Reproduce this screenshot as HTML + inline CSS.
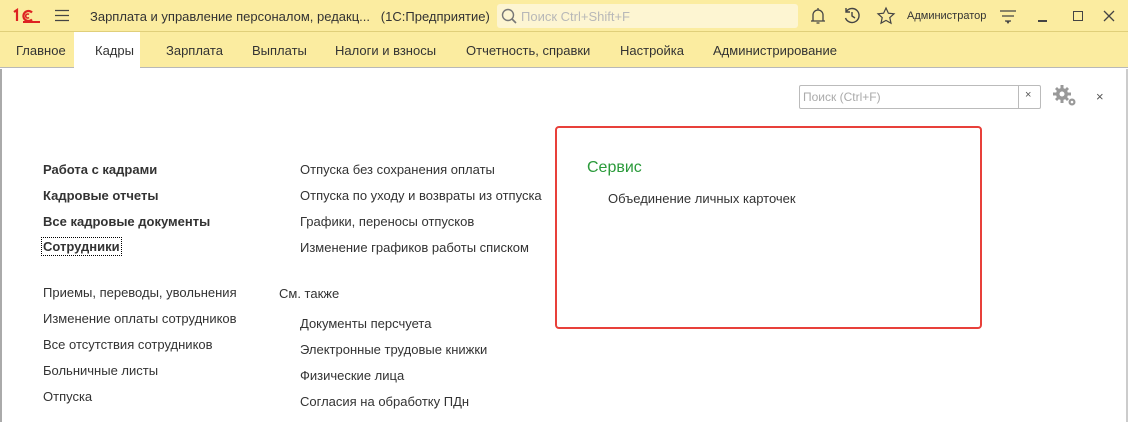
<!DOCTYPE html><html><head><meta charset="utf-8"><style>
*{margin:0;padding:0;box-sizing:border-box}
body{width:1128px;height:422px;overflow:hidden;background:#fff;font-family:"Liberation Sans",Arial,sans-serif;font-size:13px;color:#333;position:relative}
.a{position:absolute;white-space:nowrap}
#top{position:absolute;left:0;top:0;width:1128px;height:32px;background:#fbeca0;border-bottom:1px solid #e0cf7a}
#tabs{position:absolute;left:0;top:32px;width:1128px;height:36px;background:#fbeca0;border-bottom:1px solid #b8b8b8}
.b{font-weight:bold}
</style></head><body>
<div id="top"></div>
<div id="tabs"></div>
<div class="a" style="left:0;top:69px;width:2px;height:353px;background:#aaa"></div>
<div class="a" style="left:1126px;top:69px;width:2px;height:353px;background:#ccc"></div>
<svg class="a" style="left:12px;top:8px" width="28" height="16" viewBox="0 0 28 16"><path d="M2 4L5 2V13" fill="none" stroke="#d22" stroke-width="2.2"/><path d="M20 4.5A5 5 0 1 0 20 11.5" fill="none" stroke="#d22" stroke-width="2.2"/><path d="M17 6.5A2 2 0 1 0 17 9.5" fill="none" stroke="#d22" stroke-width="1.6"/><path d="M11 14H28" stroke="#d22" stroke-width="2"/></svg>
<svg class="a" style="left:55px;top:9px" width="14" height="13"><path d="M0 1.5H14M0 6.5H14M0 11.5H14" stroke="#444" stroke-width="1.3"/></svg>
<div class="a" style="left:90px;top:9px">Зарплата и управление персоналом, редакц...&nbsp;&nbsp;&nbsp;(1С:Предприятие)</div>
<div class="a" style="left:497px;top:4px;width:301px;height:24px;background:#fdf5d2;border-radius:3px"></div>
<svg class="a" style="left:501px;top:8px" width="16" height="16"><circle cx="7" cy="7" r="5.5" fill="none" stroke="#777" stroke-width="1.4"/><path d="M11 11L15 15" stroke="#777" stroke-width="1.6"/></svg>
<div class="a" style="left:521px;top:9px;color:#b8b8b8">Поиск Ctrl+Shift+F</div>
<svg class="a" style="left:808px;top:6px;width:20px;height:20px" viewBox="0 0 20 20"><path d="M5 15V9a5 5 0 0110 0v6zM3 15h14M8.5 17h3M10 2v2" fill="none" stroke="#444" stroke-width="1.3"/></svg>
<svg class="a" style="left:842px;top:6px;width:20px;height:20px" viewBox="0 0 20 20"><path d="M4 6A7 7 0 1 1 3.5 12M4 2v4h4M10 6v4l3 2" fill="none" stroke="#444" stroke-width="1.4"/></svg>
<svg class="a" style="left:876px;top:6px;width:20px;height:20px" viewBox="0 0 20 20"><path d="M10 2l2.4 5.2 5.6.6-4.2 3.8 1.2 5.6L10 14.4 5 17.2l1.2-5.6L2 7.8l5.6-.6z" fill="none" stroke="#444" stroke-width="1.2"/></svg>
<div class="a" style="left:907px;top:10px;font-size:11px">Администратор</div>
<svg class="a" style="left:998px;top:8px" width="20" height="18"><path d="M2 3H18M4 8H16M7 13h6" stroke="#444" stroke-width="1.3"/><path d="M8 13l2 3 2-3z" fill="#444"/></svg>
<div class="a" style="left:1038px;top:20px;width:9px;height:1.5px;background:#444"></div>
<div class="a" style="left:1073px;top:11px;width:10px;height:10px;border:1.3px solid #444"></div>
<svg class="a" style="left:1103px;top:10px" width="12" height="12"><path d="M1 1L11 11M11 1L1 11" stroke="#444" stroke-width="1.3"/></svg>
<div class="a" style="left:74px;top:32px;width:66px;height:36px;background:#fff"></div>
<div class="a" style="left:16px;top:43px">Главное</div>
<div class="a" style="left:95px;top:43px">Кадры</div>
<div class="a" style="left:166px;top:43px">Зарплата</div>
<div class="a" style="left:252px;top:43px">Выплаты</div>
<div class="a" style="left:335px;top:43px">Налоги и взносы</div>
<div class="a" style="left:466px;top:43px">Отчетность, справки</div>
<div class="a" style="left:620px;top:43px">Настройка</div>
<div class="a" style="left:713px;top:43px">Администрирование</div>
<div class="a" style="left:799px;top:85px;width:242px;height:24px;border:1px solid #bbb;border-radius:2px"></div>
<div class="a" style="left:1018px;top:85px;width:1px;height:24px;background:#bbb"></div>
<div class="a" style="left:803px;top:90px;color:#aaa;font-size:12px">Поиск (Ctrl+F)</div>
<div class="a" style="left:1025px;top:89px;font-size:11px;color:#555">×</div>
<svg class="a" style="left:1052px;top:84px" width="26" height="24" viewBox="0 0 26 24"><g fill="#999"><circle cx="10" cy="10" r="6"/><path d="M8.5 1h3v4h-3zM8.5 15h3v4h-3zM1 8.5h4v3H1zM15 8.5h4v3h-4zM3 5l2-2 3 3-2 2zM12 14l2-2 3 3-2 2zM3 15l3-3 2 2-3 3zM12 6l3-3 2 2-3 3z"/><circle cx="20" cy="18" r="3.5"/></g><circle cx="10" cy="10" r="2.5" fill="#fff"/><circle cx="20" cy="18" r="1.3" fill="#fff"/></svg>
<div class="a" style="left:1096px;top:89px;font-size:13px;color:#555">×</div>
<div class="a b" style="left:43px;top:162px">Работа с кадрами</div>
<div class="a b" style="left:43px;top:188px">Кадровые отчеты</div>
<div class="a b" style="left:43px;top:214px">Все кадровые документы</div>
<div class="a b" style="left:41px;top:237px;border:1px dotted #000;padding:1px 1px">Сотрудники</div>
<div class="a" style="left:43px;top:285px">Приемы, переводы, увольнения</div>
<div class="a" style="left:43px;top:311px">Изменение оплаты сотрудников</div>
<div class="a" style="left:43px;top:337px">Все отсутствия сотрудников</div>
<div class="a" style="left:43px;top:363px">Больничные листы</div>
<div class="a" style="left:43px;top:389px">Отпуска</div>
<div class="a" style="left:300px;top:162px">Отпуска без сохранения оплаты</div>
<div class="a" style="left:300px;top:188px">Отпуска по уходу и возвраты из отпуска</div>
<div class="a" style="left:300px;top:214px">Графики, переносы отпусков</div>
<div class="a" style="left:300px;top:240px">Изменение графиков работы списком</div>
<div class="a" style="left:279px;top:286px">См. также</div>
<div class="a" style="left:300px;top:316px">Документы персчуета</div>
<div class="a" style="left:300px;top:342px">Электронные трудовые книжки</div>
<div class="a" style="left:300px;top:368px">Физические лица</div>
<div class="a" style="left:300px;top:394px">Согласия на обработку ПДн</div>
<div class="a" style="left:555px;top:126px;width:427px;height:203px;border:2px solid #e8403a;border-radius:4px"></div>
<div class="a" style="left:587px;top:159px;font-size:16px;color:#2a9a3a">Сервис</div>
<div class="a" style="left:608px;top:191px">Объединение личных карточек</div>
</body></html>
